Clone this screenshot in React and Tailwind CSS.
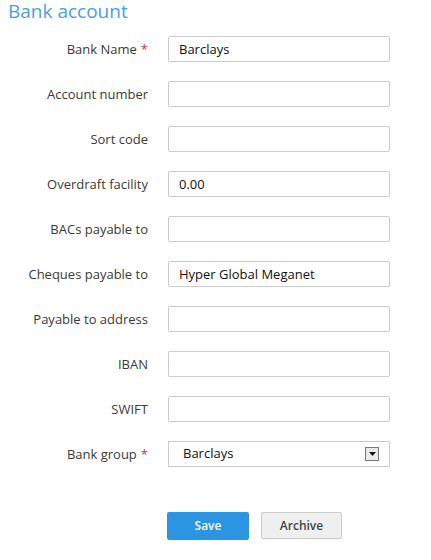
const fields = [
  { label: "Bank Name", required: true, value: "Barclays" },
  { label: "Account number", value: "" },
  { label: "Sort code", value: "" },
  { label: "Overdraft facility", value: "0.00" },
  { label: "BACs payable to", value: "" },
  { label: "Cheques payable to", value: "Hyper Global Meganet" },
  { label: "Payable to address", value: "" },
  { label: "IBAN", value: "" },
  { label: "SWIFT", value: "" },
];

function Label({ text, required }) {
  return (
    <div className="w-[148px] shrink-0 pt-[1px] text-right text-[13px] text-[#3a3a3a]">
      {text}
      {required && <span className="ml-1 text-[#d0323c]">*</span>}
    </div>
  );
}

export default function App() {
  return (
    <div className="min-h-[560px] w-[431px] bg-white font-['Open_Sans',sans-serif]">
      <h1 className="pl-[8px] text-[19px] leading-[22px] text-[#4aa0e0]">Bank account</h1>

      <div className="mt-[14px] flex flex-col gap-[19px]">
        {fields.map((field) => (
          <div className="flex items-center gap-[20px]" key={field.label}>
            <Label required={field.required} text={field.label} />
            <input
              className="h-[26px] w-[222px] rounded-[2px] border border-[#cccccc] px-[10px] text-[13px] text-[#111] outline-none"
              defaultValue={field.value}
              type="text"
            />
          </div>
        ))}

        <div className="flex items-center gap-[20px]">
          <Label required text="Bank group" />
          <div className="flex h-[26px] w-[222px] items-center justify-between border border-[#cccccc] pl-[14px] pr-[10px] text-[13px] text-[#111]">
            <span>Barclays</span>
            <span className="flex h-[14px] w-[14px] items-center justify-center border border-[#777] bg-[#eaeaea]">
              <svg height="4" viewBox="0 0 7 4" width="7">
                <path d="M0 0h7L3.5 4z" fill="#111" />
              </svg>
            </span>
          </div>
        </div>
      </div>

      <div className="mt-[45px] flex gap-[12px] pl-[167px]">
        <button
          className="h-[28px] w-[82px] rounded-[2px] bg-[#2b95e2] text-[12px] font-semibold text-white"
          type="button"
        >
          Save
        </button>
        <button
          className="h-[27px] w-[81px] rounded-[2px] border border-[#cccccc] bg-[#efefef] text-[12px] font-semibold text-[#444]"
          type="button"
        >
          Archive
        </button>
      </div>
    </div>
  );
}
